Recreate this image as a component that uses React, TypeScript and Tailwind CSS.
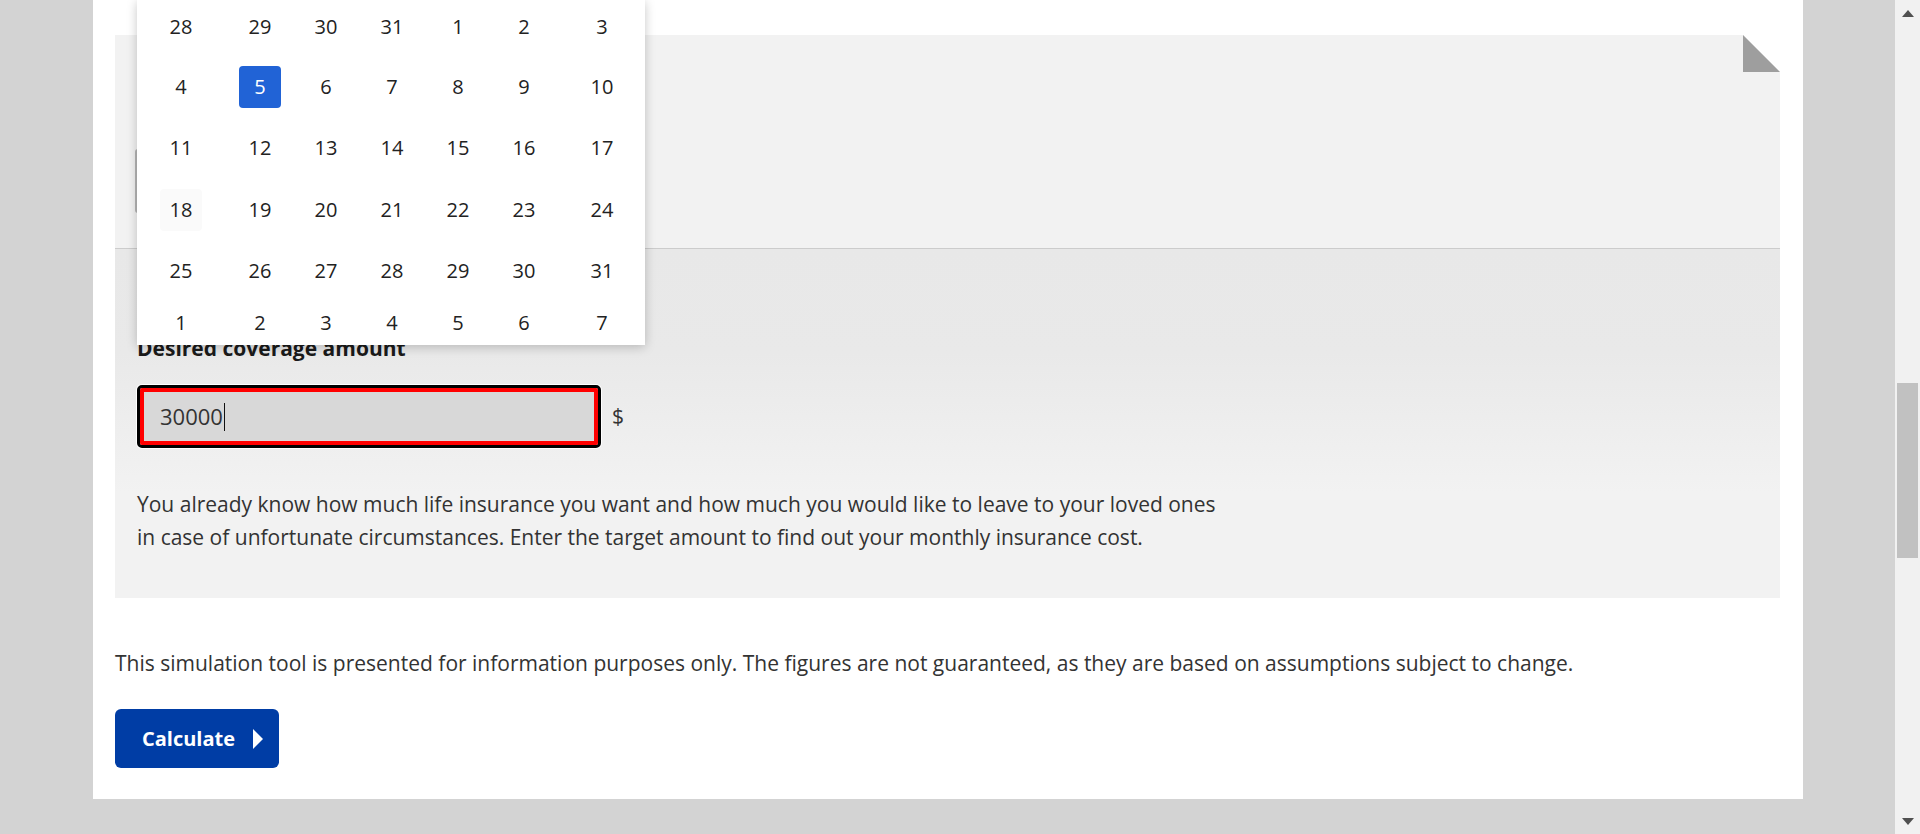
import React from "react";

const rows: string[][] = [
  ["28", "29", "30", "31", "1", "2", "3"],
  ["4", "5", "6", "7", "8", "9", "10"],
  ["11", "12", "13", "14", "15", "16", "17"],
  ["18", "19", "20", "21", "22", "23", "24"],
  ["25", "26", "27", "28", "29", "30", "31"],
  ["1", "2", "3", "4", "5", "6", "7"],
];

function Calendar() {
  return (
    <div className="absolute left-[44px] top-0 z-20 w-[508px] h-[345px] overflow-hidden bg-white shadow-[0_2px_10px_rgba(0,0,0,0.22)]">
      <div className="-mt-[3px]">
        {rows.map((r, ri) => (
          <div
            key={ri}
            className={
              "grid grid-cols-[88px_70px_62px_70px_62px_70px_86px] items-center " +
              (ri === 0 ? "h-[59px]" : ri === 5 ? "h-[41px]" : "h-[61.5px]")
            }
          >
            {r.map((d, ci) => {
              const selected = ri === 1 && ci === 1;
              const hover = ri === 3 && ci === 0;
              return (
                <div key={ci} className="flex items-center justify-center">
                  <span
                    className={
                      "flex h-[42px] w-[42px] items-center justify-center rounded-[4px] text-[20px] " +
                      (selected
                        ? "bg-[#2163d6] text-white"
                        : hover
                        ? "bg-[#fafafa] text-[#222]"
                        : "text-[#222]")
                    }
                  >
                    {d}
                  </span>
                </div>
              );
            })}
          </div>
        ))}
      </div>
    </div>
  );
}

function Scrollbar() {
  return (
    <div className="flex h-[834px] w-[25px] flex-col items-center bg-[#f1f1f1]">
      <div className="flex h-[26px] w-full items-center justify-center">
        <svg width="12" height="7" viewBox="0 0 12 7">
          <polygon points="6,0 12,7 0,7" fill="#505050" />
        </svg>
      </div>
      <div className="mt-[357px] h-[175px] w-[21px] bg-[#c1c1c1]" />
      <div className="flex-1" />
      <div className="flex h-[26px] w-full items-center justify-center">
        <svg width="12" height="7" viewBox="0 0 12 7">
          <polygon points="0,0 12,0 6,7" fill="#505050" />
        </svg>
      </div>
    </div>
  );
}

export default function App() {
  return (
    <div
      className="flex h-[834px] w-[1920px] overflow-hidden bg-[#d3d3d3] text-[#333]"
      style={{ fontFamily: "'Open Sans', 'Noto Sans', sans-serif" }}
    >
      <div className="w-[1895px] pl-[93px]">
        <div className="relative h-[799px] w-[1710px] bg-white px-[22px] pt-[35px]">
          <Calendar />
          <div className="w-[1665px]">
            {/* upper section */}
            <div className="relative h-[214px] bg-[#f2f2f2] border-b border-[#cccccc] pl-[20px] pt-[114px]">
              <div className="absolute right-0 top-0 h-[37px] w-[37px]">
                <svg width="37" height="37" viewBox="0 0 37 37">
                  <polygon points="0,0 37,0 37,37" fill="#ffffff" />
                  <polygon points="0,0 0,37 37,37" fill="#9e9e9e" />
                </svg>
              </div>
              <div className="h-[64px] w-[300px] rounded-[3px] border-2 border-[#b5b5b5] bg-white" />
            </div>
            {/* lower section */}
            <div className="h-[349px] bg-[linear-gradient(180deg,#e8e8e8_0%,#e9e9e9_30%,#f2f2f2_70%,#f2f2f2_100%)] pl-[22px] pt-[85px]">
              <div className="text-[21px] font-bold leading-[28px] text-[#1a1a1a]">
                Desired coverage amount
              </div>
              <div className="mt-[23px] flex items-center">
                <div className="flex h-[63px] w-[464px] items-center rounded-[5px] border-[3px] border-black bg-[#d8d8d8] shadow-[0_0_0_1px_#ffffff] outline-[4px] outline-offset-[-7px] outline-solid outline-[#ff0000]">
                  <span className="pl-[20px] text-[22px] text-[#333]">30000</span>
                  <span className="ml-[1px] h-[28px] w-px bg-[#111]" />
                </div>
                <span className="ml-[11px] text-[21px] text-[#333]">$</span>
              </div>
              <p className="mt-[40px] text-[21px] leading-[33px] text-[#333]">
                You already know how much life insurance you want and how much you would like to leave to your loved ones
                <br />
                in case of unfortunate circumstances. Enter the target amount to find out your monthly insurance cost.
              </p>
            </div>
          </div>
          <p className="mt-[50px] text-[21px] leading-[30px] text-[#333]">
            This simulation tool is presented for information purposes only. The figures are not guaranteed, as they are based on assumptions subject to change.
          </p>
          <button className="mt-[31px] flex h-[59px] w-[164px] items-center rounded-[6px] bg-[#003da5] pl-[27px] text-[20px] font-bold text-white">
            Calculate
            <svg className="ml-[18px]" width="10" height="20" viewBox="0 0 10 20">
              <polygon points="0,0 10,10 0,20" fill="#ffffff" />
            </svg>
          </button>
        </div>
      </div>
      <Scrollbar />
    </div>
  );
}
